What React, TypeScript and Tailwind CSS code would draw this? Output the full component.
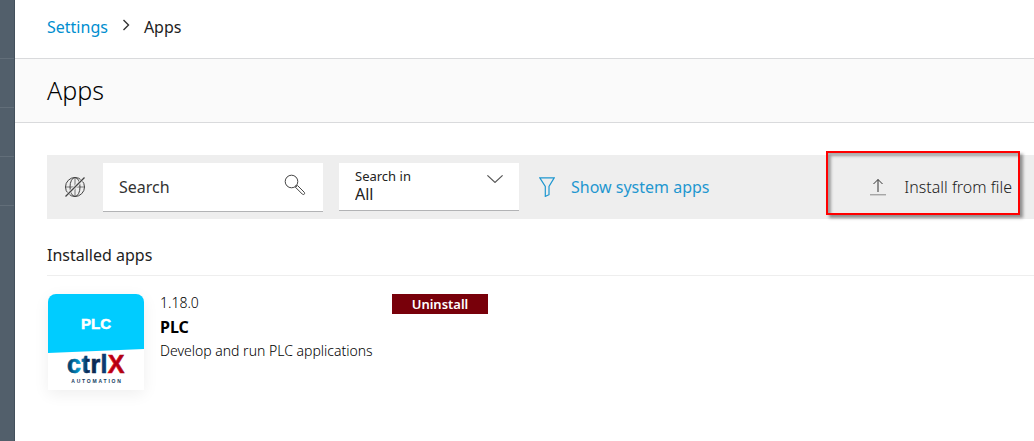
import { useState } from "react";

export default function App() {
  return (
    <div className="flex min-h-screen bg-white font-['Noto_Sans','Open_Sans',sans-serif] text-black">
      <SideRail />
      <div className="flex min-w-0 flex-1 flex-col">
        <Breadcrumb />
        <header className="flex h-16 items-center border-b border-[#d9dadc] bg-[#fafafa] pb-px pl-8">
          <h1 className="text-[25px] leading-8 font-light">Apps</h1>
        </header>
        <main className="pt-8 pl-8">
          <Toolbar />
          <InstalledApps />
        </main>
      </div>
    </div>
  );
}

function SideRail() {
  return (
    <div className="w-[15px] shrink-0 border-r border-[#43505c] bg-[#525f6b] pt-[10px]">
      <div className="h-[49px] border-b border-[#626e79]"></div>
      <div className="h-[49px] border-b border-[#626e79]"></div>
      <div className="h-[49px] border-b border-[#626e79]"></div>
      <div className="h-[49px] border-b border-[#626e79]"></div>
    </div>
  );
}

function Breadcrumb() {
  return (
    <nav className="flex h-[59px] items-center border-b border-[#d9dadc] pb-[5px] pl-8">
      <a href="#settings" className="text-base text-[#008ecf]">
        Settings
      </a>
      <svg
        className="mx-[14px] mb-1 h-3 w-2"
        viewBox="0 0 8 12"
        fill="none"
        stroke="#333"
        strokeWidth="1.4">
        <path d="M1.5 1l5 5-5 5" />
      </svg>
      <span className="text-base text-[#222]">Apps</span>
    </nav>
  );
}

function Toolbar() {
  const [search, setSearch] = useState("");

  return (
    <div className="flex h-16 items-center bg-[#eee] pl-[17px]">
      <OfflineIcon />
      <label className="ml-[17px] flex h-[49px] w-[220px] items-center border-b border-[#b2b3b5] bg-white px-4">
        <input
          type="text"
          aria-label="Search"
          placeholder="Search"
          value={search}
          onChange={(e) => setSearch(e.target.value)}
          className="min-w-0 flex-1 text-base outline-none placeholder:text-[#333]"
        />
        <SearchIcon />
      </label>
      <div className="relative ml-4 flex h-12 w-[180px] flex-col border-b border-[#b2b3b5] bg-white pt-[3px]">
        <label htmlFor="search-in" className="pl-4 text-[13px] leading-5 text-[#222]">
          Search in
        </label>
        <select
          id="search-in"
          className="w-full appearance-none pl-4 text-base leading-4 text-[#222] outline-none">
          <option>All</option>
        </select>
        <svg
          className="pointer-events-none absolute top-3 right-4 h-2 w-4"
          viewBox="0 0 16 8"
          fill="none"
          stroke="#555"
          strokeWidth="1.2">
          <path d="M.4.4L8 7.4l7.6-7" />
        </svg>
      </div>
      <button className="ml-5 flex items-center gap-4 text-base text-[#1f97d0]">
        <FilterIcon />
        Show system apps
      </button>
      <div className="relative ml-auto flex items-center pr-[22px]">
        <button className="flex items-center gap-[18px] text-base font-light text-[#222]">
          <UploadIcon />
          Install from file
        </button>
        <div className="pointer-events-none absolute -top-6 right-[14px] -bottom-4 -left-11 border-2 border-[#f00] shadow-[3px_3px_3px_#0006,inset_3px_3px_3px_#0005]"></div>
      </div>
    </div>
  );
}

function InstalledApps() {
  return (
    <section>
      <h2 className="border-b border-[#eee] pt-6 pb-2 text-base leading-6 text-[#222]">
        Installed apps
      </h2>
      <div className="flex items-start pt-[18px] pl-px">
        <AppLogo />
        <div className="ml-4 w-[232px]">
          <div className="text-sm leading-[18px] font-light">1.18.0</div>
          <h3 className="text-base leading-[30px] font-bold">PLC</h3>
          <p className="text-sm leading-[18px] font-light">
            Develop and run PLC applications
          </p>
        </div>
        <button className="h-5 w-24 bg-[#78000a] text-[13px] leading-5 font-semibold text-white">
          Uninstall
        </button>
      </div>
    </section>
  );
}

function AppLogo() {
  return (
    <svg
      className="h-24 w-24 rounded-t-lg shadow-[0_4px_16px_#0001]"
      viewBox="0 0 96 96"
      fontFamily="Liberation Sans, sans-serif"
      fontWeight="700"
      textAnchor="middle">
      <defs>
        <linearGradient id="c-fill">
          <stop offset="0" stopColor="#00315f" />
          <stop offset="1" stopColor="#00a5dc" />
        </linearGradient>
        <linearGradient id="t-fill">
          <stop offset="0" stopColor="#0087c0" />
          <stop offset="0.6" stopColor="#0b2a55" />
        </linearGradient>
        <linearGradient id="x-fill">
          <stop offset="0.6" stopColor="#e30a1c" />
          <stop offset="1" stopColor="#8c0010" />
        </linearGradient>
      </defs>
      <path fill="#fff" d="M0 0h96v96H0z" />
      <path fill="#0cf" d="M0 0h96v55L0 59z" />
      <text x="48" y="34.5" fontSize="15" fill="#fff" stroke="#fff" strokeWidth="0.5">
        PLC
      </text>
      <g fontSize="25" strokeWidth="0.6" textAnchor="start">
        <text x="19" y="79" fill="url(#c-fill)" stroke="url(#c-fill)">
          c
        </text>
        <text x="33.5" y="79" fill="url(#t-fill)" stroke="url(#t-fill)">
          t
        </text>
        <text x="42.5" y="79" fill="#0b2a55" stroke="#0b2a55">
          r
        </text>
        <text x="52.5" y="79" fill="#0b3a73" stroke="#0b3a73">
          l
        </text>
        <text x="59.8" y="79" fill="#b20012" stroke="url(#x-fill)">
          X
        </text>
      </g>
      <text x="49" y="89" fontSize="5" letterSpacing="1.8" fill="#123a60">
        AUTOMATION
      </text>
    </svg>
  );
}

function OfflineIcon() {
  return (
    <svg
      className="h-[22px] w-[22px]"
      viewBox="0 0 22 22"
      fill="none"
      stroke="#444">
      <circle cx="11" cy="11" r="9.5" />
      <ellipse cx="11" cy="11" rx="5" ry="9.5" />
      <path d="M11 1.5v19M1.5 11h19" strokeWidth="0.7" />
      <path d="M1.5 20.5l19-19" strokeWidth="3" stroke="#eee" />
      <path d="M1.5 20.5l19-19" strokeWidth="1.2" />
    </svg>
  );
}

function SearchIcon() {
  return (
    <svg
      className="mb-[3px] h-6 w-6"
      viewBox="0 0 24 24"
      fill="none"
      stroke="#444">
      <circle cx="8.5" cy="8.5" r="6.3" />
      <path d="M12.4 14.2l7 7c1.4 1 2.9-.4 1.9-1.9L14.4 12.4zM12.6 12.6l1 1" />
    </svg>
  );
}

function FilterIcon() {
  return (
    <svg
      className="h-5 w-4"
      viewBox="0 0 16 20"
      fill="none"
      stroke="#1f97d0"
      strokeWidth="1.2">
      <path d="M.8.8h14.4L10 9.5v8.2L6.3 19.4V9.5z" />
    </svg>
  );
}

function UploadIcon() {
  return (
    <svg className="h-[18px] w-4" viewBox="0 0 16 18" fill="none" stroke="#333">
      <path d="M8 14V1.5M3.5 6L8 1.5 12.5 6" />
      <path d="M0 16.8h16" stroke="#888" />
    </svg>
  );
}
